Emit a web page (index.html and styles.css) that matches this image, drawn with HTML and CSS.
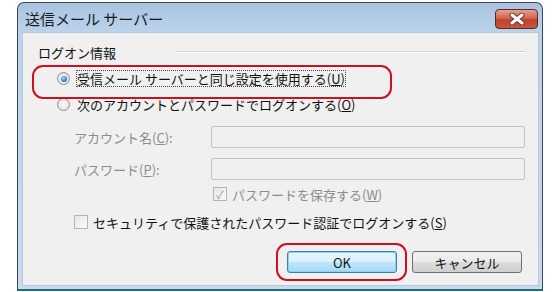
FILE: index.html
```html
<!DOCTYPE html>
<html lang="ja">
<head>
  <meta charset="UTF-8" />
  <title>送信メール サーバー</title>
  <link rel="stylesheet" href="styles.css">
</head>
<body>
  <div class="window">
    <div class="titlebar">
      <span class="title">送信メール サーバー</span>
      <button class="close">
        <svg width="16" height="12" viewBox="0 0 16 12">
          <path d="M3 2 L13 10 M13 2 L3 10" stroke="#5e3a36" stroke-width="5" stroke-linecap="round" fill="none"/>
          <path d="M3 2 L13 10 M13 2 L3 10" stroke="#fff" stroke-width="3" stroke-linecap="round" fill="none"/>
        </svg>
      </button>
    </div>

    <div class="client">
      <div class="group-head">
        <span>ログオン情報</span>
        <div class="group-line"></div>
      </div>

      <div class="row radio-row first">
        <span class="radio checked"></span>
        <span class="focus">受信メール サーバーと同じ設定を使用する(<u>U</u>)</span>
      </div>
      <div class="row radio-row">
        <span class="radio"></span>
        <span>次のアカウントとパスワードでログオンする(<u>O</u>)</span>
      </div>

      <div class="row field">
        <span class="field-label">アカウント名(<u>C</u>):</span>
        <div class="input"></div>
      </div>
      <div class="row field">
        <span class="field-label">パスワード(<u>P</u>):</span>
        <div class="input"></div>
      </div>

      <div class="row check-row save">
        <span class="check checked">✓</span>
        <span>パスワードを保存する(<u>W</u>)</span>
      </div>
      <div class="row check-row secure">
        <span class="check"></span>
        <span>セキュリティで保護されたパスワード認証でログオンする(<u>S</u>)</span>
      </div>

      <div class="buttons">
        <button class="btn default">OK</button>
        <button class="btn">キャンセル</button>
      </div>
    </div>

    <!-- red marks drawn over the dialog -->
    <div class="mark mark-radio"></div>
    <div class="mark mark-ok"></div>
  </div>
</body>
</html>
```

FILE: styles.css
```css
body {
  margin: 0;
  background: #fff;
  font-family: "Noto Sans CJK JP", "Noto Sans", sans-serif;
  font-size: 13px;
  color: #111;
}

.window {
  position: relative;
  margin: 2px 0 0 17px;
  width: 524px;
  height: 286px;
  border: 1px solid #3a4452;
  border-bottom: 2px solid #1f6f86;
  border-radius: 7px 7px 0 0;
  background: linear-gradient(#a9c3e0, #bcd3ec 30px, #c7dbef);
  display: flex;
  flex-direction: column;
}

.titlebar {
  height: 29px;
  display: flex;
  align-items: center;
  justify-content: space-between;
  padding: 0 4px 0 7px;
}

.title {
  font-size: 15px;
  color: #1a1a1a;
  margin-top: 1px;
}

.close {
  width: 43px;
  height: 20px;
  margin-top: 2px;
  padding: 0;
  border: 1px solid #5b2a2a;
  border-radius: 4px;
  background: linear-gradient(#e8a08e, #d3654d 45%, #c0402a 55%, #c9553e);
  display: flex;
  align-items: center;
  justify-content: center;
}

.client {
  flex: 1;
  margin: 0 3px 3px 4px;
  border: 1px solid #b4c8de;
  background: #f0f0f0;
  padding: 6px 13px 0 15px;
  display: flex;
  flex-direction: column;
}

.group-head {
  height: 26px;
  display: flex;
  align-items: center;
}

.group-head span {
  width: 138px;
}

.group-line {
  flex: 1;
  height: 1px;
  background: #d5d5d5;
  border-bottom: 1px solid #fff;
  margin-right: -1px;
}

.row {
  display: flex;
  align-items: center;
}

.radio-row {
  height: 24px;
  padding-left: 19px;
  gap: 7px;
}

.radio-row.first {
  height: 27px;
}

.radio {
  width: 11px;
  height: 11px;
  border-radius: 50%;
  border: 1px solid #8e8f8f;
  background: radial-gradient(#fdfdfd, #d8d8d8);
  display: flex;
  align-items: center;
  justify-content: center;
}

.radio.checked::after {
  content: "";
  width: 6px;
  height: 6px;
  border-radius: 50%;
  background: radial-gradient(circle at 40% 35%, #9fdcff, #1a6fc2 70%, #0d4f8f);
}

.focus {
  outline: 1px dotted #444;
  line-height: 15px;
}

.field {
  height: 22px;
  margin-top: 10px;
  padding-left: 36px;
}

.field-label {
  width: 137px;
  color: #8d8d8d;
}

.input {
  flex: 1;
  height: 20px;
  border: 1px solid #c4c4c4;
  border-radius: 2px;
  background: #f0f0f0;
}

.check-row {
  height: 20px;
  gap: 5px;
  color: #8d8d8d;
}

.save {
  margin-top: 4px;
  padding-left: 175px;
}

.secure {
  margin-top: 8px;
  padding-left: 36px;
  color: #111;
}

.check {
  width: 12px;
  height: 12px;
  border: 1px solid #b5b5b5;
  background: linear-gradient(135deg, #e6e6e6, #fafafa);
  font-size: 11px;
  line-height: 12px;
  text-align: center;
  color: #9a9a9a;
}

.buttons {
  margin: 19px 3px 0 0;
  display: flex;
  justify-content: flex-end;
  gap: 15px;
}

.btn {
  width: 110px;
  height: 22px;
  padding: 0;
  border: 1px solid #707070;
  border-radius: 3px;
  background: linear-gradient(#f2f2f2, #ebebeb 50%, #dddddd 51%, #cfcfcf);
  font-family: inherit;
  font-size: 13px;
  color: #111;
}

.btn.default {
  border-color: #3c7fb1;
  background: linear-gradient(#eaf6fd, #d9f0fc 50%, #bee6fd 51%, #a7d9f5);
  box-shadow: inset 0 0 0 1px #8fd0f0;
}

.mark {
  position: absolute;
  border: 2px solid #cc1020;
  border-radius: 11px;
}

.mark-radio {
  left: 14px;
  top: 62px;
  width: 356px;
  height: 30px;
}

.mark-ok {
  left: 258px;
  top: 240px;
  width: 127px;
  height: 34px;
}
```
